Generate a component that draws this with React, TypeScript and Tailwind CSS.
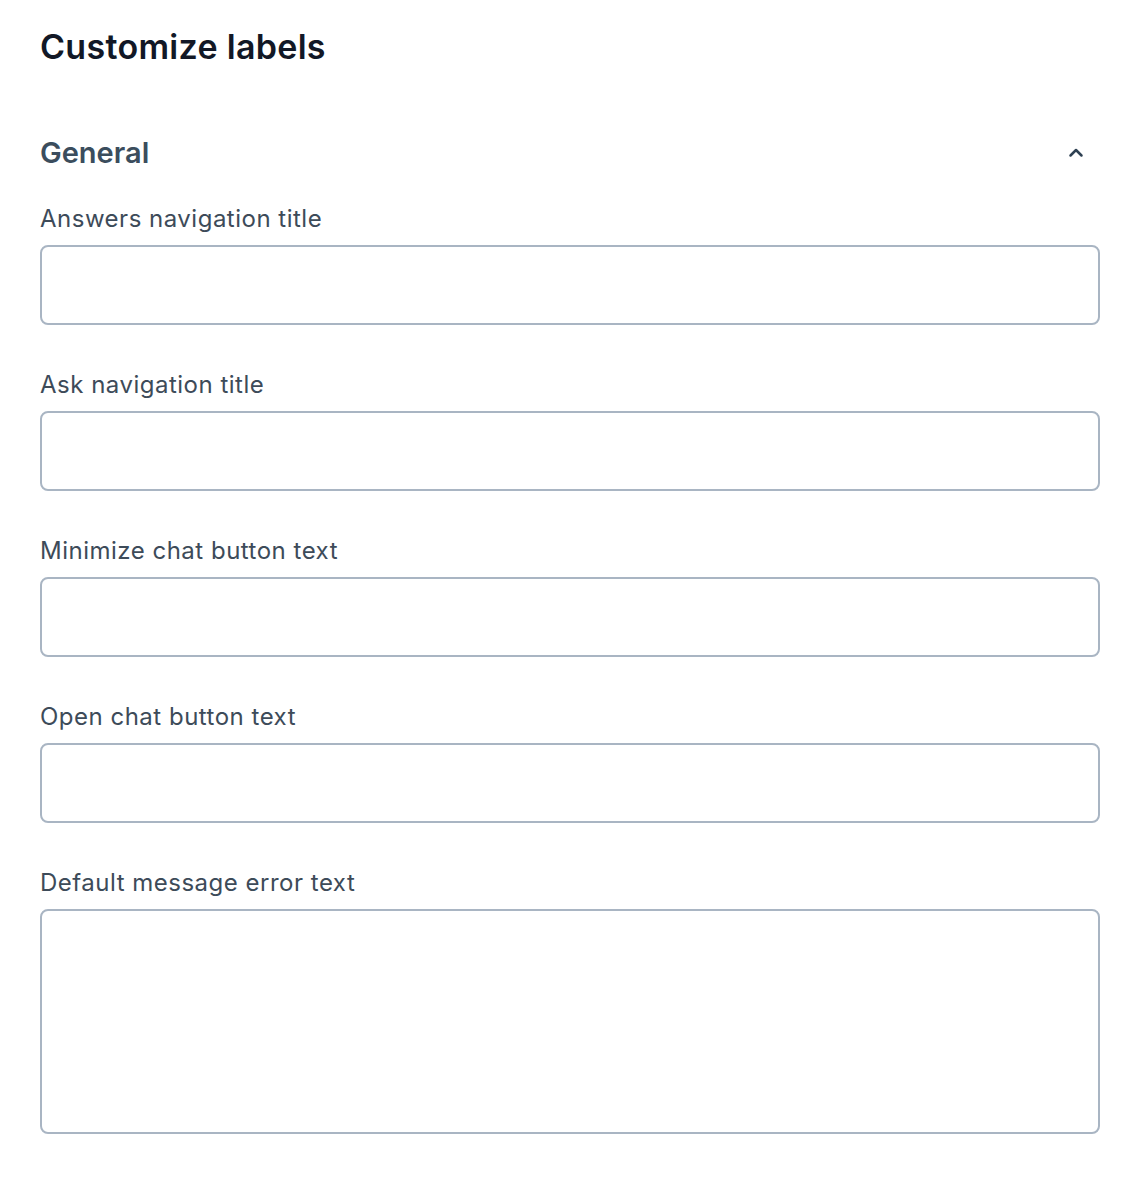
import React from "react";

const fields = [
  "Answers navigation title",
  "Ask navigation title",
  "Minimize chat button text",
  "Open chat button text",
];

function ChevronUp() {
  return (
    <svg width="24" height="24" viewBox="0 0 24 24" fill="none" stroke="#2f4153" strokeWidth="2.5" strokeLinecap="round" strokeLinejoin="round">
      <path d="M6.5 14.5 12 9l5.5 5.5" />
    </svg>
  );
}

export default function App() {
  return (
    <div className="min-h-screen bg-white font-['Inter',sans-serif]">
      <div className="w-[1060px] ml-10 pt-[27px]">
        <h1 className="text-[34px] leading-[40px] font-semibold tracking-[0.3px] text-[#121826]">Customize labels</h1>

        <div className="mt-[68px] flex items-center justify-between h-[36px]">
          <h2 className="text-[29px] leading-[36px] font-semibold text-[#3b4d5d]">General</h2>
          <button className="w-6 h-6 mr-3 flex items-center justify-center">
            <ChevronUp />
          </button>
        </div>

        <div className="mt-[33px] flex flex-col gap-[45px]">
          {fields.map((label) => (
            <label key={label} className="flex flex-col gap-[11px]">
              <span className="text-[24px] leading-[30px] tracking-[0.5px] text-[#3d4b59]">{label}</span>
              <input className="h-[80px] w-full rounded-lg border-2 border-[#a9b5c3] px-4 text-[22px] outline-none" />
            </label>
          ))}
          <label className="flex flex-col gap-[11px]">
            <span className="text-[24px] leading-[30px] tracking-[0.5px] text-[#3d4b59]">Default message error text</span>
            <textarea className="h-[225px] w-full rounded-lg border-2 border-[#a9b5c3] px-4 py-3 text-[22px] outline-none resize-none" />
          </label>
        </div>
      </div>
    </div>
  );
}
